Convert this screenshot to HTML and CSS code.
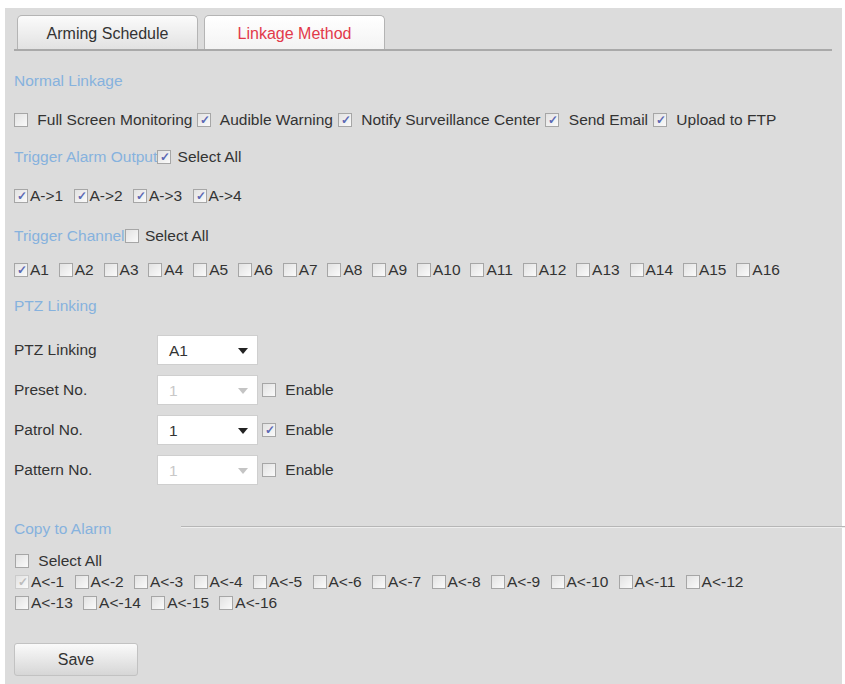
FILE: index.html
```html
<!DOCTYPE html>
<html lang="en">
<head>
    <meta charset="UTF-8">
    <title>Linkage Method</title>
    <link rel="stylesheet" href="styles.css">
</head>
<body>
<div class="panel">
    <div class="tabs">
        <div class="tab">Arming Schedule</div>
        <div class="tab active">Linkage Method</div>
    </div>

    <div class="content">
        <div class="heading">Normal Linkage</div>
        <div class="row wide">
            <label><input type="checkbox"> Full Screen Monitoring</label><label><input type="checkbox" checked> Audible Warning</label><label><input type="checkbox" checked> Notify Surveillance Center</label><label><input type="checkbox" checked> Send Email</label><label><input type="checkbox" checked> Upload to FTP</label>
        </div>

        <div class="heading">Trigger Alarm Output<label class="inline"><input type="checkbox" checked> Select All</label></div>
        <div class="row tall">
            <label><input type="checkbox" checked>A-&gt;1</label>
            <label><input type="checkbox" checked>A-&gt;2</label>
            <label><input type="checkbox" checked>A-&gt;3</label>
            <label><input type="checkbox" checked>A-&gt;4</label>
        </div>

        <div class="heading short">Trigger Channel<label class="inline"><input type="checkbox"> Select All</label></div>
        <div class="row short">
            <label><input type="checkbox" checked>A1</label>
            <label><input type="checkbox">A2</label>
            <label><input type="checkbox">A3</label>
            <label><input type="checkbox">A4</label>
            <label><input type="checkbox">A5</label>
            <label><input type="checkbox">A6</label>
            <label><input type="checkbox">A7</label>
            <label><input type="checkbox">A8</label>
            <label><input type="checkbox">A9</label>
            <label><input type="checkbox">A10</label>
            <label><input type="checkbox">A11</label>
            <label><input type="checkbox">A12</label>
            <label><input type="checkbox">A13</label>
            <label><input type="checkbox">A14</label>
            <label><input type="checkbox">A15</label>
            <label><input type="checkbox">A16</label>
        </div>

        <div class="heading">PTZ Linking</div>
        <div class="ptz">
            <div class="field">
                <span class="name">PTZ Linking</span>
                <div class="select">A1<span class="arrow"></span></div>
            </div>
            <div class="field">
                <span class="name">Preset No.</span>
                <div class="select disabled">1<span class="arrow"></span></div>
                <label><input type="checkbox"> Enable</label>
            </div>
            <div class="field">
                <span class="name">Patrol No.</span>
                <div class="select">1<span class="arrow"></span></div>
                <label><input type="checkbox" checked> Enable</label>
            </div>
            <div class="field">
                <span class="name">Pattern No.</span>
                <div class="select disabled">1<span class="arrow"></span></div>
                <label><input type="checkbox"> Enable</label>
            </div>
        </div>

        <div class="copy-head">
            <span class="heading">Copy to Alarm</span>
            <span class="rule"></span>
        </div>
        <div class="copy">
            <label class="all"><input type="checkbox"> Select All</label>
            <div class="line">
                <label><input type="checkbox" checked class="faded">A&lt;-1</label>
                <label><input type="checkbox">A&lt;-2</label>
                <label><input type="checkbox">A&lt;-3</label>
                <label><input type="checkbox">A&lt;-4</label>
                <label><input type="checkbox">A&lt;-5</label>
                <label><input type="checkbox">A&lt;-6</label>
                <label><input type="checkbox">A&lt;-7</label>
                <label><input type="checkbox">A&lt;-8</label>
                <label><input type="checkbox">A&lt;-9</label>
                <label><input type="checkbox">A&lt;-10</label>
                <label><input type="checkbox">A&lt;-11</label>
                <label><input type="checkbox">A&lt;-12</label>
            </div>
            <div class="line">
                <label><input type="checkbox">A&lt;-13</label>
                <label><input type="checkbox">A&lt;-14</label>
                <label><input type="checkbox">A&lt;-15</label>
                <label><input type="checkbox">A&lt;-16</label>
            </div>
        </div>

        <button type="button">Save</button>
    </div>
</div>
</body>
</html>
```

FILE: styles.css
```css
body {
    margin: 0;
    background: #fff;
    font-family: Arial, "Liberation Sans", sans-serif;
    font-size: 15.5px;
    color: #333;
}
.panel {
    margin: 8px 3px 0 5px;
    height: 676px;
    background: #dcdcdc;
    padding: 7px 9px 0 9px;
    box-sizing: border-box;
}
.tabs {
    display: flex;
    gap: 6px;
    padding-left: 3px;
    margin-right: 1px;
    border-bottom: 2px solid #a9a9a9;
}
.tab {
    width: 181px;
    height: 34px;
    line-height: 36px;
    text-align: center;
    font-size: 16px;
    color: #333;
    border: 1px solid #b4b4b4;
    border-bottom: none;
    border-radius: 5px 5px 0 0;
    background: linear-gradient(#fbfbfb, #e2e2e2);
    box-sizing: border-box;
}
.tab.active {
    color: #e2394a;
    background: linear-gradient(#fff, #f3f3f3);
}
.content {
    padding-top: 20px;
}
.heading {
    color: #86b2de;
    height: 20px;
    line-height: 20px;
    margin-bottom: 19px;
}
.heading.short {
    margin-bottom: 14px;
}
.heading .inline {
    color: #333;
}
.row {
    height: 20px;
    line-height: 20px;
    margin-bottom: 17px;
    white-space: nowrap;
}
.row.tall {
    margin-bottom: 20px;
}
.row.short {
    margin-bottom: 16px;
}
input[type=checkbox] {
    appearance: none;
    width: 14px;
    height: 14px;
    margin: 0 2px 0 0;
    border: 1px solid #a6a6a6;
    background: linear-gradient(135deg, #e2e2e2, #fafafa);
    vertical-align: -2px;
    position: relative;
}
input[type=checkbox]:checked::after {
    content: "\2713";
    position: absolute;
    left: 2px;
    top: 0;
    font-size: 12px;
    font-weight: bold;
    line-height: 13px;
    color: #5b68b4;
}
input.faded {
    border-color: #cbcbcb;
}
input.faded:checked::after {
    color: #bcbcbc;
}
.row label + label input,
.line label + label input {
    margin-left: 6px;
}
.row.short label + label input {
    margin-left: 5.5px;
}
.row.wide input {
    margin-right: 5px;
}
.row.wide label + label input {
    margin-left: 5px;
}
.ptz {
    display: flex;
    flex-direction: column;
    gap: 10px;
}
.field {
    display: flex;
    align-items: center;
}
.field .name {
    width: 143px;
}
.select {
    width: 101px;
    height: 30px;
    line-height: 30px;
    padding-left: 11px;
    box-sizing: border-box;
    background: #fff;
    border: 1px solid #cfcfcf;
    position: relative;
    margin-right: 4px;
}
.select .arrow {
    position: absolute;
    right: 9px;
    top: 12px;
    border-left: 5px solid transparent;
    border-right: 5px solid transparent;
    border-top: 6px solid #222;
}
.select.disabled {
    color: #c8c8c8;
}
.select.disabled .arrow {
    border-top-color: #c4c4c4;
}
.field label input {
    margin-right: 5px;
}
.copy-head {
    display: flex;
    align-items: center;
    margin-top: 34px;
    margin-right: -12px;
}
.copy-head .heading {
    margin: 0;
}
.copy-head .rule {
    flex: 1;
    margin: -4px 0 0 70px;
    border-top: 1px solid #b6b6b6;
    border-bottom: 1px solid #eee;
}
.copy {
    margin-top: 12px;
    line-height: 20px;
}
.copy .all input {
    margin: 0 5px 0 1px;
}
.line {
    height: 21px;
    line-height: 21px;
    white-space: nowrap;
}
.line label:first-child input {
    margin-left: 1px;
}
button {
    margin-top: 30px;
    width: 124px;
    height: 33px;
    font-family: inherit;
    font-size: 16px;
    color: #333;
    border: 1px solid #c2c2c2;
    border-radius: 3px;
    background: linear-gradient(#fafafa, #d6d6d6);
}
```
